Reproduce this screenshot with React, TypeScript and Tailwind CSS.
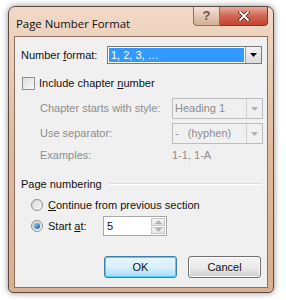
import type { ReactNode } from 'react';

const Arrow = ({ up, disabled }: { up?: boolean; disabled?: boolean }) => (
  <svg width="7" height="4" viewBox="0 0 7 4" className={up ? 'rotate-180' : ''}>
    <path d="M0 0h7L3.5 4z" fill={disabled ? '#b0b0b0' : '#000'} />
  </svg>
);

const DisabledCombo = ({ children }: { children: ReactNode }) => (
  <div className="flex w-[91px] h-[21px] border border-[#bcbcbc] bg-[#f0f0f0]">
    <div className="flex-1 flex items-center pl-[2px] text-[#8d8d8d]">{children}</div>
    <div className="w-[16px] border-l border-[#d0d0d0] flex items-center justify-center">
      <Arrow disabled />
    </div>
  </div>
);

const Radio = ({ checked }: { checked?: boolean }) => (
  <div className="w-[12px] h-[12px] rounded-full border border-[#8e8f8f] bg-gradient-to-br from-[#d6d6d6] to-[#fbfbfb] flex items-center justify-center">
    {checked && (
      <div className="w-[6px] h-[6px] rounded-full bg-gradient-to-br from-[#9ad7f7] to-[#0d5a9c] shadow-[0_0_1px_#1f6fb0]" />
    )}
  </div>
);

const PageNumberFormat = () => {
  return (
    <div
      className="w-[286px] h-[300px] bg-white pt-[6px] pl-[8px] text-[11px] text-[#111]"
      style={{ fontFamily: '"Liberation Sans", Arial, sans-serif' }}
    >
      <div className="w-[266px] h-[287px] rounded-t-[7px] rounded-b-[5px] border border-[#5b4a3f] bg-gradient-to-b from-[#f1d9c7] via-[#e0ba9d] to-[#d9b092] shadow-[0_0_6px_rgba(0,0,0,0.45)] flex flex-col">
        <div className="h-[29px] flex items-start justify-between pl-[7px] pr-[5px]">
          <span className="mt-[9px] leading-[15px]" style={{ fontFamily: '"Open Sans", "Liberation Sans", sans-serif', fontSize: '11.4px' }}>
            Page Number Format
          </span>
          <div className="flex">
            <div className="w-[27px] h-[19px] rounded-bl-[4px] border border-[#8d735f] border-t-0 bg-gradient-to-b from-[#f4e2d6] to-[#d2ae94] flex items-center justify-center text-[#6d5444] text-[13px] font-bold">
              ?
            </div>
            <div className="w-[48px] h-[19px] rounded-br-[4px] border border-[#7e3a2c] border-t-0 border-l-0 bg-gradient-to-b from-[#e9a99c] via-[#cf6653] to-[#c5422d] flex items-center justify-center">
              <svg width="12" height="10" viewBox="0 0 12 10">
                <path d="M2 1l8 8M10 1L2 9" stroke="#5a2418" strokeWidth="3.4" strokeLinecap="square" />
                <path d="M2 1l8 8M10 1L2 9" stroke="#fff" strokeWidth="1.8" strokeLinecap="square" />
              </svg>
            </div>
          </div>
        </div>
        <div className="mx-[5px] h-[252px] border border-[#8c6e5a] bg-[#f0f0f0] pl-[6px]">
          <div className="mt-[9px] h-[18px] flex items-center">
            <span className="w-[86px]">
              Number <span className="underline">f</span>ormat:
            </span>
            <div className="flex w-[155px] h-[18px] border border-[#7a7a7a] bg-white">
              <div className="flex-1 m-[1px] bg-[#3399ff] text-white flex items-center pl-[2px]">1, 2, 3, …</div>
              <div className="w-[16px] border-l border-[#a0a0a0] bg-gradient-to-b from-[#f4f4f4] to-[#dcdcdc] flex items-center justify-center">
                <Arrow />
              </div>
            </div>
          </div>
          <div className="mt-[13px] h-[13px] flex items-center pl-[1px]">
            <div className="w-[13px] h-[13px] border border-[#8e8f8f] bg-gradient-to-br from-[#dcdcdc] to-[#fbfbfb]" />
            <span className="ml-[4px]">
              Include chapter <span className="underline">n</span>umber
            </span>
          </div>
          <div className="mt-[8px] flex items-center text-[#8d8d8d]">
            <span className="w-[151px] pl-[19px]">Chapter starts with style:</span>
            <DisabledCombo>Heading 1</DisabledCombo>
          </div>
          <div className="mt-[4px] flex items-center text-[#8d8d8d]">
            <span className="w-[151px] pl-[19px]">Use separator:</span>
            <DisabledCombo>-&nbsp;&nbsp;&nbsp;(hyphen)</DisabledCombo>
          </div>
          <div className="mt-[4px] h-[14px] flex items-center text-[#8d8d8d]">
            <span className="w-[151px] pl-[19px]">Examples:</span>
            <span>1-1, 1-A</span>
          </div>
          <div className="mt-[15px] h-[14px] flex items-center pr-[5px]">
            <span>Page numbering</span>
            <div className="flex-1 ml-[7px] h-[2px] border-t border-[#d5dfe5] border-b border-b-white" />
          </div>
          <div className="mt-[7px] h-[14px] flex items-center pl-[10px]">
            <Radio />
            <span className="ml-[5px]">
              <span className="underline">C</span>ontinue from previous section
            </span>
          </div>
          <div className="mt-[4px] h-[20px] flex items-center pl-[10px]">
            <Radio checked />
            <span className="ml-[5px] w-[55px]">
              Start <span className="underline">a</span>t:
            </span>
            <div className="flex w-[64px] h-[20px] border border-[#a9a9a9] bg-white">
              <div className="flex-1 flex items-center pl-[3px]">5</div>
              <div className="w-[16px] flex flex-col p-[1px] gap-[1px]">
                <div className="flex-1 border border-[#c8c8c8] bg-gradient-to-b from-[#f6f6f6] to-[#e2e2e2] flex items-center justify-center">
                  <Arrow up disabled />
                </div>
                <div className="flex-1 border border-[#c8c8c8] bg-gradient-to-b from-[#f6f6f6] to-[#e2e2e2] flex items-center justify-center">
                  <Arrow disabled />
                </div>
              </div>
            </div>
          </div>
          <div className="mt-[20px] flex gap-[11px] pl-[83px]">
            <div className="w-[73px] h-[22px] rounded-[3px] border border-[#3c7fb1] shadow-[inset_0_0_0_1px_#48d1fc] bg-gradient-to-b from-[#eaf6fd] via-[#d9f0fc] to-[#a7d9f5] flex items-center justify-center">
              OK
            </div>
            <div className="w-[73px] h-[22px] rounded-[3px] border border-[#707070] shadow-[inset_0_0_0_1px_#fbfbfb] bg-gradient-to-b from-[#f2f2f2] via-[#ebebeb] to-[#cfcfcf] flex items-center justify-center">
              Cancel
            </div>
          </div>
        </div>
      </div>
    </div>
  );
};

export default function App() {
  return <PageNumberFormat />;
}
